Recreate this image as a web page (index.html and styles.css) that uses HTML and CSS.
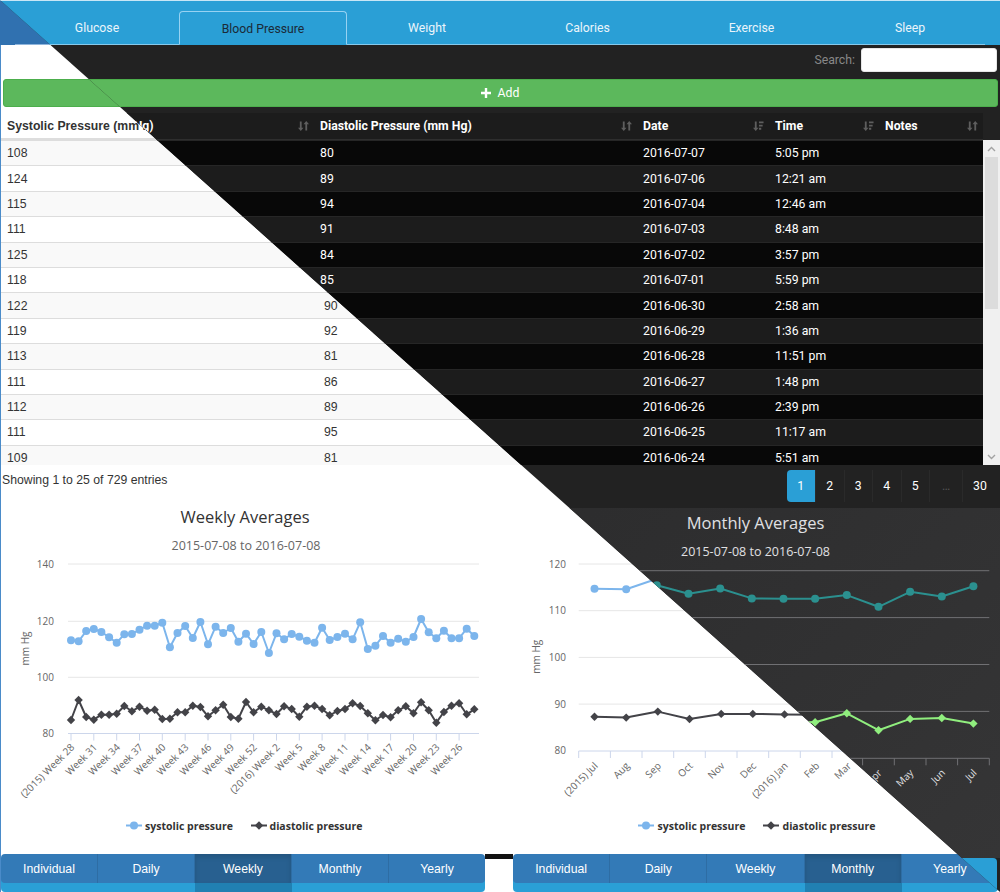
FILE: index.html
```html
<!DOCTYPE html>
<html>
<head>
<meta charset="utf-8">
<title>Blood Pressure</title>
<link rel="stylesheet" href="styles.css">
</head>
<body>
<div class="stage">

<!-- ================= LIGHT THEME ================= -->
<div class="theme light">
  <nav class="tabs">
    <ul class="tablist">
      <li class="tab">Glucose</li>
      <li class="tab active">Blood Pressure</li>
      <li class="tab">Weight</li>
      <li class="tab">Calories</li>
      <li class="tab">Exercise</li>
      <li class="tab">Sleep</li>
    </ul>
  </nav>
  <div class="main">
    <div class="toolbar"><span class="search-label">Search:</span><span class="search-input"></span></div>
    <div class="add-btn"><svg class="plus" width="10" height="10" viewBox="0 0 10 10"><path d="M3.8 0h2.4v3.8H10v2.4H6.2V10H3.8V6.2H0V3.8h3.8z"/></svg><span>Add</span></div>
    <div class="thead">
      <div class="th"><span>Systolic Pressure (mm Hg)</span><svg class="si" viewBox="0 0 12 12"><path d="M2 1h2v7h2l-3 3.5L0 8h2zM8 11h2V4h2L9 .5 6 4h2z"/></svg></div>
      <div class="th"><span>Diastolic Pressure (mm Hg)</span><svg class="si" viewBox="0 0 12 12"><path d="M2 1h2v7h2l-3 3.5L0 8h2zM8 11h2V4h2L9 .5 6 4h2z"/></svg></div>
      <div class="th"><span>Date</span><svg class="si" viewBox="0 0 12 12"><path d="M2 1h2v7h2l-3 3.5L0 8h2zM6.5 1h5v2h-5zM6.5 4.5h4v2h-4zM6.5 8h2.5v2h-2.5z"/></svg></div>
      <div class="th"><span>Time</span><svg class="si" viewBox="0 0 12 12"><path d="M2 1h2v7h2l-3 3.5L0 8h2zM6.5 1h5v2h-5zM6.5 4.5h4v2h-4zM6.5 8h2.5v2h-2.5z"/></svg></div>
      <div class="th"><span>Notes</span><svg class="si" viewBox="0 0 12 12"><path d="M2 1h2v7h2l-3 3.5L0 8h2zM8 11h2V4h2L9 .5 6 4h2z"/></svg></div>
    </div>
    <div class="tbody-wrap">
      <div class="rows">
        <div class="row"><span class="cell">108</span><span class="cell">80</span><span class="cell">2016-07-07</span><span class="cell">5:05 pm</span><span class="cell"></span></div>
        <div class="row"><span class="cell">124</span><span class="cell">89</span><span class="cell">2016-07-06</span><span class="cell">12:21 am</span><span class="cell"></span></div>
        <div class="row"><span class="cell">115</span><span class="cell">94</span><span class="cell">2016-07-04</span><span class="cell">12:46 am</span><span class="cell"></span></div>
        <div class="row"><span class="cell">111</span><span class="cell">91</span><span class="cell">2016-07-03</span><span class="cell">8:48 am</span><span class="cell"></span></div>
        <div class="row"><span class="cell">125</span><span class="cell">84</span><span class="cell">2016-07-02</span><span class="cell">3:57 pm</span><span class="cell"></span></div>
        <div class="row"><span class="cell">118</span><span class="cell">85</span><span class="cell">2016-07-01</span><span class="cell">5:59 pm</span><span class="cell"></span></div>
        <div class="row"><span class="cell">122</span><span class="cell">90</span><span class="cell">2016-06-30</span><span class="cell">2:58 am</span><span class="cell"></span></div>
        <div class="row"><span class="cell">119</span><span class="cell">92</span><span class="cell">2016-06-29</span><span class="cell">1:36 am</span><span class="cell"></span></div>
        <div class="row"><span class="cell">113</span><span class="cell">81</span><span class="cell">2016-06-28</span><span class="cell">11:51 pm</span><span class="cell"></span></div>
        <div class="row"><span class="cell">111</span><span class="cell">86</span><span class="cell">2016-06-27</span><span class="cell">1:48 pm</span><span class="cell"></span></div>
        <div class="row"><span class="cell">112</span><span class="cell">89</span><span class="cell">2016-06-26</span><span class="cell">2:39 pm</span><span class="cell"></span></div>
        <div class="row"><span class="cell">111</span><span class="cell">95</span><span class="cell">2016-06-25</span><span class="cell">11:17 am</span><span class="cell"></span></div>
        <div class="row"><span class="cell">109</span><span class="cell">81</span><span class="cell">2016-06-24</span><span class="cell">5:51 am</span><span class="cell"></span></div>
      </div>
      <div class="scrollbar"><div class="sb-arrow"><svg width="9" height="6" viewBox="0 0 9 6"><path d="M1 5l3.5-3.5L8 5" class="chev"/></svg></div><div class="sb-thumb"></div><div class="sb-track"></div><div class="sb-arrow"><svg width="9" height="6" viewBox="0 0 9 6"><path d="M1 1l3.5 3.5L8 1" class="chev"/></svg></div></div>
    </div>
    <div class="footer">
      <div class="info">Showing 1 to 25 of 729 entries</div>
      <ul class="pager">
        <li class="pg active">1</li><li class="pg">2</li><li class="pg">3</li><li class="pg">4</li><li class="pg">5</li><li class="pg ell">…</li><li class="pg last">30</li>
      </ul>
    </div>
    <div class="charts">
      <div class="chart">
        <svg class="csvg" width="500" height="346" viewBox="0 0 500 346">
          <defs>
            <marker id="lc" markerUnits="userSpaceOnUse" markerWidth="10" markerHeight="10" refX="5" refY="5"><circle cx="5" cy="5" r="4" class="f-blue"/></marker>
            <marker id="ld" markerUnits="userSpaceOnUse" markerWidth="10" markerHeight="10" refX="5" refY="5"><path d="M5 0.8L9.2 5 5 9.2 0.8 5z" class="f-black"/></marker>
          </defs>
          <text class="t-title" x="244" y="15" text-anchor="middle">Weekly Averages</text>
          <text class="t-sub" x="245" y="41.5" text-anchor="middle">2015-07-08 to 2016-07-08</text>
          <path class="grid-l" d="M67 56H478M67 113.3H478M67 169.3H478"/>
          <path class="axis-l" d="M67 225.5H478"/>
          <path class="axis-l" d="M70 225.5v7M92.8 225.5v7M115.7 225.5v7M138.5 225.5v7M161.3 225.5v7M184.2 225.5v7M207 225.5v7M229.8 225.5v7M252.6 225.5v7M275.5 225.5v7M298.3 225.5v7M321.1 225.5v7M344 225.5v7M366.8 225.5v7M389.6 225.5v7M412.5 225.5v7M435.3 225.5v7M458.1 225.5v7"/>
          <g class="t-axis" text-anchor="end">
            <text x="53" y="59.5">140</text><text x="53" y="116.8">120</text><text x="53" y="172.8">100</text><text x="53" y="228.8">80</text>
          </g>
          <text class="t-axis" text-anchor="middle" transform="translate(28 140.5) rotate(-90)">mm Hg</text>
          <g class="t-axis" text-anchor="end">
            <text transform="translate(74 240) rotate(-45)">(2015) Week 28</text>
            <text transform="translate(96.8 240) rotate(-45)">Week 31</text>
            <text transform="translate(119.7 240) rotate(-45)">Week 34</text>
            <text transform="translate(142.5 240) rotate(-45)">Week 37</text>
            <text transform="translate(165.3 240) rotate(-45)">Week 40</text>
            <text transform="translate(188.2 240) rotate(-45)">Week 43</text>
            <text transform="translate(211 240) rotate(-45)">Week 46</text>
            <text transform="translate(233.8 240) rotate(-45)">Week 49</text>
            <text transform="translate(256.6 240) rotate(-45)">Week 52</text>
            <text transform="translate(279.5 240) rotate(-45)">(2016) Week 2</text>
            <text transform="translate(302.3 240) rotate(-45)">Week 5</text>
            <text transform="translate(325.1 240) rotate(-45)">Week 8</text>
            <text transform="translate(348 240) rotate(-45)">Week 11</text>
            <text transform="translate(370.8 240) rotate(-45)">Week 14</text>
            <text transform="translate(393.6 240) rotate(-45)">Week 17</text>
            <text transform="translate(416.5 240) rotate(-45)">Week 20</text>
            <text transform="translate(439.3 240) rotate(-45)">Week 23</text>
            <text transform="translate(462.1 240) rotate(-45)">Week 26</text>
          </g>
          <polyline class="s-blue" points="70,132.3 77.6,133.3 85.2,123 92.8,121 100.4,124 108.1,129.3 115.7,134.7 123.3,126.3 130.9,126 138.5,121.7 146.1,117.7 153.7,117.7 161.3,114.7 168.9,139.3 176.5,125 184.2,118 191.8,130 199.4,114 207,136.3 214.6,118.7 222.2,125 229.8,120 237.4,133.7 245,125.7 252.6,136 260.3,124 267.9,145 275.5,125.3 283.1,131.3 290.7,126 298.3,128.7 305.9,132.7 313.5,134.7 321.1,119.7 328.7,132 336.4,129 344,125.7 351.6,131.3 359.2,114.3 366.8,141 374.4,137.7 382,128 389.6,134.7 397.2,130.7 404.8,133.7 412.5,129 420.1,111 427.7,124.3 435.3,130.3 442.9,122.7 450.5,130.3 458.1,130.3 465.7,120.7 473.3,128"/>
          <polyline class="s-black" points="70,212 77.6,192 85.2,209 92.8,211.7 100.4,206.7 108.1,206.7 115.7,205.7 123.3,198 130.9,203.3 138.5,198.7 146.1,202.7 153.7,201.7 161.3,211 168.9,210.7 176.5,204.3 184.2,204.3 191.8,197.7 199.4,199 207,208.3 214.6,202.3 222.2,196.7 229.8,209 237.4,210.7 245,194 252.6,204.3 260.3,198.7 267.9,202.3 275.5,206 283.1,198.3 290.7,201 298.3,208.7 305.9,198.7 313.5,197.7 321.1,201 328.7,207.3 336.4,203 344,201 351.6,195.3 359.2,198 366.8,205.3 374.4,212.3 382,207 389.6,209.3 397.2,202.3 404.8,198.3 412.5,205.3 420.1,194.3 427.7,202.3 435.3,214.7 442.9,204 450.5,197.7 458.1,195.3 465.7,206.3 473.3,201.3"/>
          <path class="ln-blue" d="M125 317.5H141"/><circle class="f-blue" cx="133" cy="317.5" r="4"/>
          <text class="t-legend" x="144" y="321.5">systolic pressure</text>
          <path class="ln-black" d="M250 317.5H266"/><path class="f-black" d="M258 313.3L262.2 317.5 258 321.7 253.8 317.5z"/>
          <text class="t-legend" x="268.5" y="321.5">diastolic pressure</text>
        </svg>
      </div>
      <div class="chart">
        <svg class="csvg" width="500" height="346" viewBox="0 0 500 346">
          <defs>
            <marker id="lc2" markerUnits="userSpaceOnUse" markerWidth="10" markerHeight="10" refX="5" refY="5"><circle cx="5" cy="5" r="4" class="f-blue"/></marker>
            <marker id="ld2" markerUnits="userSpaceOnUse" markerWidth="10" markerHeight="10" refX="5" refY="5"><path d="M5 0.8L9.2 5 5 9.2 0.8 5z" class="f-black"/></marker>
          </defs>
          <text class="t-title" x="255.5" y="14.7" text-anchor="middle">Monthly Averages</text>
          <text class="t-sub" x="255.5" y="41.5" text-anchor="middle">2015-07-08 to 2016-07-08</text>
          <path class="grid-l" d="M77.7 56H489.3M77.7 102.7H489.3M77.7 149.4H489.3M77.7 196.1H489.3"/>
          <path class="axis-l" d="M77.7 243H489.3"/>
          <path class="axis-l" d="M77.7 243v7M109.4 243v7M141 243v7M172.7 243v7M204.3 243v7M236 243v7M267.7 243v7M299.3 243v7M331 243v7M362.6 243v7M394.3 243v7M426 243v7M457.6 243v7M489.3 243v7"/>
          <g class="t-axis" text-anchor="end">
            <text x="65" y="59.5">120</text><text x="65" y="106.2">110</text><text x="65" y="152.9">100</text><text x="65" y="199.6">90</text><text x="65" y="246.3">80</text>
          </g>
          <text class="t-axis" text-anchor="middle" transform="translate(38.5 148.7) rotate(-90)">mm Hg</text>
          <g class="t-axis" text-anchor="end">
            <text transform="translate(97.5 258.5) rotate(-45)">(2015) Jul</text>
            <text transform="translate(129.2 258.5) rotate(-45)">Aug</text>
            <text transform="translate(160.8 258.5) rotate(-45)">Sep</text>
            <text transform="translate(192.5 258.5) rotate(-45)">Oct</text>
            <text transform="translate(224.2 258.5) rotate(-45)">Nov</text>
            <text transform="translate(255.8 258.5) rotate(-45)">Dec</text>
            <text transform="translate(287.5 258.5) rotate(-45)">(2016) Jan</text>
            <text transform="translate(319.1 258.5) rotate(-45)">Feb</text>
            <text transform="translate(350.8 258.5) rotate(-45)">Mar</text>
            <text transform="translate(382.5 258.5) rotate(-45)">Apr</text>
            <text transform="translate(414.1 258.5) rotate(-45)">May</text>
            <text transform="translate(445.8 258.5) rotate(-45)">Jun</text>
            <text transform="translate(477.4 258.5) rotate(-45)">Jul</text>
          </g>
          <polyline class="s-blue2" points="93.5,80.8 125.2,81.2 156.8,70.5 188.5,78.9 220.2,73.7 251.8,83.6 283.5,84 315.1,84 346.8,80.3 378.5,92 410.1,77 441.8,81.7 473.4,71.4"/>
          <polyline class="s-black2" points="93.5,208.7 125.2,209.6 156.8,203.6 188.5,211 220.2,205.9 251.8,205.9 283.5,206.4 315.1,206.8 346.8,198 378.5,214.8 410.1,203.6 441.8,202.6 473.4,208.3"/>
          <path class="ln-blue" d="M137 317.5H153"/><circle class="f-blue" cx="145" cy="317.5" r="4"/>
          <text class="t-legend" x="156.5" y="321.5">systolic pressure</text>
          <path class="ln-black" d="M262 317.5H278"/><path class="f-black" d="M270 313.3L274.2 317.5 270 321.7 265.8 317.5z"/>
          <text class="t-legend" x="281.5" y="321.5">diastolic pressure</text>
        </svg>
      </div>
    </div>
    <div class="btnbar">
      <div class="btngroup"><span class="btn">Individual</span><span class="btn">Daily</span><span class="btn active">Weekly</span><span class="btn">Monthly</span><span class="btn">Yearly</span></div>
      <div class="btngap"><span class="gapbar"></span></div>
      <div class="btngroup"><span class="btn">Individual</span><span class="btn">Daily</span><span class="btn">Weekly</span><span class="btn active">Monthly</span><span class="btn">Yearly</span></div>
    </div>
  </div>
</div>

<!-- ================= DARK THEME ================= -->
<div class="theme dark">
  <nav class="tabs">
    <ul class="tablist">
      <li class="tab">Glucose</li>
      <li class="tab active">Blood Pressure</li>
      <li class="tab">Weight</li>
      <li class="tab">Calories</li>
      <li class="tab">Exercise</li>
      <li class="tab">Sleep</li>
    </ul>
  </nav>
  <div class="main">
    <div class="toolbar"><span class="search-label">Search:</span><span class="search-input"></span></div>
    <div class="add-btn"><svg class="plus" width="10" height="10" viewBox="0 0 10 10"><path d="M3.8 0h2.4v3.8H10v2.4H6.2V10H3.8V6.2H0V3.8h3.8z"/></svg><span>Add</span></div>
    <div class="thead">
      <div class="th"><span>Systolic Pressure (mm Hg)</span><svg class="si" viewBox="0 0 12 12"><path d="M2 1h2v7h2l-3 3.5L0 8h2zM8 11h2V4h2L9 .5 6 4h2z"/></svg></div>
      <div class="th"><span>Diastolic Pressure (mm Hg)</span><svg class="si" viewBox="0 0 12 12"><path d="M2 1h2v7h2l-3 3.5L0 8h2zM8 11h2V4h2L9 .5 6 4h2z"/></svg></div>
      <div class="th"><span>Date</span><svg class="si" viewBox="0 0 12 12"><path d="M2 1h2v7h2l-3 3.5L0 8h2zM6.5 1h5v2h-5zM6.5 4.5h4v2h-4zM6.5 8h2.5v2h-2.5z"/></svg></div>
      <div class="th"><span>Time</span><svg class="si" viewBox="0 0 12 12"><path d="M2 1h2v7h2l-3 3.5L0 8h2zM6.5 1h5v2h-5zM6.5 4.5h4v2h-4zM6.5 8h2.5v2h-2.5z"/></svg></div>
      <div class="th"><span>Notes</span><svg class="si" viewBox="0 0 12 12"><path d="M2 1h2v7h2l-3 3.5L0 8h2zM8 11h2V4h2L9 .5 6 4h2z"/></svg></div>
    </div>
    <div class="tbody-wrap">
      <div class="rows">
        <div class="row"><span class="cell">108</span><span class="cell">80</span><span class="cell">2016-07-07</span><span class="cell">5:05 pm</span><span class="cell"></span></div>
        <div class="row"><span class="cell">124</span><span class="cell">89</span><span class="cell">2016-07-06</span><span class="cell">12:21 am</span><span class="cell"></span></div>
        <div class="row"><span class="cell">115</span><span class="cell">94</span><span class="cell">2016-07-04</span><span class="cell">12:46 am</span><span class="cell"></span></div>
        <div class="row"><span class="cell">111</span><span class="cell">91</span><span class="cell">2016-07-03</span><span class="cell">8:48 am</span><span class="cell"></span></div>
        <div class="row"><span class="cell">125</span><span class="cell">84</span><span class="cell">2016-07-02</span><span class="cell">3:57 pm</span><span class="cell"></span></div>
        <div class="row"><span class="cell">118</span><span class="cell">85</span><span class="cell">2016-07-01</span><span class="cell">5:59 pm</span><span class="cell"></span></div>
        <div class="row"><span class="cell">122</span><span class="cell">90</span><span class="cell">2016-06-30</span><span class="cell">2:58 am</span><span class="cell"></span></div>
        <div class="row"><span class="cell">119</span><span class="cell">92</span><span class="cell">2016-06-29</span><span class="cell">1:36 am</span><span class="cell"></span></div>
        <div class="row"><span class="cell">113</span><span class="cell">81</span><span class="cell">2016-06-28</span><span class="cell">11:51 pm</span><span class="cell"></span></div>
        <div class="row"><span class="cell">111</span><span class="cell">86</span><span class="cell">2016-06-27</span><span class="cell">1:48 pm</span><span class="cell"></span></div>
        <div class="row"><span class="cell">112</span><span class="cell">89</span><span class="cell">2016-06-26</span><span class="cell">2:39 pm</span><span class="cell"></span></div>
        <div class="row"><span class="cell">111</span><span class="cell">95</span><span class="cell">2016-06-25</span><span class="cell">11:17 am</span><span class="cell"></span></div>
        <div class="row"><span class="cell">109</span><span class="cell">81</span><span class="cell">2016-06-24</span><span class="cell">5:51 am</span><span class="cell"></span></div>
      </div>
      <div class="scrollbar"><div class="sb-arrow"><svg width="9" height="6" viewBox="0 0 9 6"><path d="M1 5l3.5-3.5L8 5" class="chev"/></svg></div><div class="sb-thumb"></div><div class="sb-track"></div><div class="sb-arrow"><svg width="9" height="6" viewBox="0 0 9 6"><path d="M1 1l3.5 3.5L8 1" class="chev"/></svg></div></div>
    </div>
    <div class="footer">
      <div class="info">Showing 1 to 25 of 729 entries</div>
      <ul class="pager">
        <li class="pg active">1</li><li class="pg">2</li><li class="pg">3</li><li class="pg">4</li><li class="pg">5</li><li class="pg ell">…</li><li class="pg last">30</li>
      </ul>
    </div>
    <div class="charts">
      <div class="chart">
        <svg class="csvg" width="500" height="350" viewBox="0 0 500 350">
          <text class="t-title" x="244" y="20.7" text-anchor="middle">Weekly Averages</text>
          <text class="t-sub" x="245" y="47.5" text-anchor="middle">2015-07-08 to 2016-07-08</text>
        </svg>
      </div>
      <div class="chart">
        <svg class="csvg" width="500" height="350" viewBox="0 0 500 350">
          <defs>
            <marker id="dc" markerUnits="userSpaceOnUse" markerWidth="10" markerHeight="10" refX="5" refY="5"><circle cx="5" cy="5" r="4" class="f-teal"/></marker>
            <marker id="dd" markerUnits="userSpaceOnUse" markerWidth="10" markerHeight="10" refX="5" refY="5"><path d="M5 0.8L9.2 5 5 9.2 0.8 5z" class="f-green"/></marker>
          </defs>
          <text class="t-title" x="255.5" y="20.7" text-anchor="middle">Monthly Averages</text>
          <text class="t-sub" x="255.5" y="47.5" text-anchor="middle">2015-07-08 to 2016-07-08</text>
          <path class="grid-d" d="M77.7 62.7H489.3M77.7 109.6H489.3M77.7 156.5H489.3M77.7 203.4H489.3"/>
          <path class="axis-d" d="M77.7 250.3H489.3"/>
          <path class="axis-d" d="M77.7 250.3v7M109.4 250.3v7M141 250.3v7M172.7 250.3v7M204.3 250.3v7M236 250.3v7M267.7 250.3v7M299.3 250.3v7M331 250.3v7M362.6 250.3v7M394.3 250.3v7M426 250.3v7M457.6 250.3v7M489.3 250.3v7"/>
          <g class="t-axis" text-anchor="end">
            <text x="65" y="66.2">120</text><text x="65" y="113.1">110</text><text x="65" y="160">100</text><text x="65" y="206.9">90</text><text x="65" y="253.8">80</text>
          </g>
          <text class="t-axis" text-anchor="middle" transform="translate(38.5 156) rotate(-90)">mm Hg</text>
          <g class="t-axis" text-anchor="end">
            <text transform="translate(97.5 265.5) rotate(-45)">(2015) Jul</text>
            <text transform="translate(129.2 265.5) rotate(-45)">Aug</text>
            <text transform="translate(160.8 265.5) rotate(-45)">Sep</text>
            <text transform="translate(192.5 265.5) rotate(-45)">Oct</text>
            <text transform="translate(224.2 265.5) rotate(-45)">Nov</text>
            <text transform="translate(255.8 265.5) rotate(-45)">Dec</text>
            <text transform="translate(287.5 265.5) rotate(-45)">(2016) Jan</text>
            <text transform="translate(319.1 265.5) rotate(-45)">Feb</text>
            <text transform="translate(350.8 265.5) rotate(-45)">Mar</text>
            <text transform="translate(382.5 265.5) rotate(-45)">Apr</text>
            <text transform="translate(414.1 265.5) rotate(-45)">May</text>
            <text transform="translate(445.8 265.5) rotate(-45)">Jun</text>
            <text transform="translate(477.4 265.5) rotate(-45)">Jul</text>
          </g>
          <polyline class="s-teal" points="93.5,87.6 125.2,88 156.8,77.2 188.5,85.7 220.2,80.5 251.8,90.4 283.5,90.8 315.1,90.8 346.8,87.1 378.5,98.8 410.1,83.8 441.8,88.5 473.4,78.2"/>
          <polyline class="s-green" points="93.5,216.1 125.2,217 156.8,210.9 188.5,218.4 220.2,213.2 251.8,213.2 283.5,213.7 315.1,214.2 346.8,205.3 378.5,222.2 410.1,210.9 441.8,210 473.4,215.6"/>
        </svg>
      </div>
    </div>
    <div class="btnbar">
      <div class="btngroup"><span class="btn">Individual</span><span class="btn">Daily</span><span class="btn active">Weekly</span><span class="btn">Monthly</span><span class="btn">Yearly</span></div>
      <div class="btngap"></div>
      <div class="btngroup"><span class="btn">Individual</span><span class="btn">Daily</span><span class="btn">Weekly</span><span class="btn active">Monthly</span><span class="btn">Yearly</span></div>
    </div>
  </div>
</div>

</div>
</body>
</html>
```

FILE: styles.css
```css
* { box-sizing: border-box; margin: 0; padding: 0; }
html, body { width: 1000px; height: 892px; overflow: hidden; }
body { margin: 0; background: #fff; }

.stage { position: relative; width: 1000px; height: 892px; overflow: hidden; }

.theme {
  width: 1000px;
  height: 892px;
  display: flex;
  flex-direction: column;
  overflow: hidden;
  font-size: 12.25px;
}
.light { font-family: "Liberation Sans", Arial, sans-serif; color: #333; background: #fff; }
.dark {
  position: absolute;
  left: 0;
  top: 0;
  font-family: Roboto, "Liberation Sans", sans-serif;
  color: #fff;
  background: #222;
  clip-path: polygon(0 0, 100% 0, 100% 100%);
}

/* ---------- tabs ---------- */
.tabs { height: 45px; flex: none; padding: 10px 15px 0; border-top: 1px solid #c8e6f6; }
.light .tabs { background: #3071b0; border-top-color: #a9c6e4; }
.dark .tabs { background: #2a9fd6; }
.tablist {
  display: grid;
  grid-template-columns: 164px 168px 160px 161px 167px 150px;
  height: 34px;
  list-style: none;
}
.tab {
  display: flex;
  align-items: center;
  justify-content: center;
  border-bottom: 1px solid #86c9ec;
  color: #eaf5fb;
  padding-top: 1px;
}
.light .tab { border-bottom-color: #8fb5dc; color: #fff; }
.tab.active {
  border: 1px solid #97d2f2;
  border-bottom-color: transparent;
  border-radius: 4px 4px 0 0;
  color: #1b2a37;
}
.light .tab.active { border-color: #a9c6e4; border-bottom-color: transparent; background: #fff; color: #555; }

/* ---------- main ---------- */
.main { flex: 1; display: flex; flex-direction: column; min-height: 0; }
.light .main { border-left: 1px solid #4a8bc9; }

.toolbar {
  height: 33px;
  flex: none;
  display: flex;
  align-items: flex-start;
  justify-content: flex-end;
  gap: 6px;
  padding: 3px 3px 0 0;
}
.search-label { line-height: 24px; color: #888; }
.light .search-label { color: #333; }
.search-input { width: 136px; height: 24px; background: #fff; border-radius: 3px; border: 1px solid #e6e6e6; }
.light .search-input { border-color: #aaa; }

.add-btn {
  height: 28px;
  flex: none;
  margin: 1px 2px 6px;
  background: #5cb85c;
  border: 1px solid #4cae4c;
  border-radius: 3px;
  color: #fff;
  display: flex;
  align-items: center;
  justify-content: center;
  gap: 7px;
}
.plus { fill: #fff; }

/* ---------- table ---------- */
.thead, .row {
  display: grid;
  grid-template-columns: 314px 323px 132px 110px 104px;
  width: 983px;
}
.light .thead, .light .row { grid-template-columns: 317px 323px 132px 110px 1fr; width: 982px; }
.thead { height: 27px; flex: none; font-weight: bold; }
.dark .thead { background: #1c1c1c; border-bottom: 1px solid #2e2e2e; }
.light .thead { background: #fff; border-bottom: 2px solid #ddd; }
.th { display: flex; align-items: center; justify-content: space-between; padding: 0 5px 0 6px; }
.si { width: 11px; height: 12px; fill: #5e5e5e; }
.light .si { fill: #c4c4c4; }

.tbody-wrap { height: 325px; flex: none; display: flex; overflow: hidden; }
.rows { width: 983px; }
.light .rows { width: 982px; }
.row { height: 25.4px; align-items: center; }
.cell { padding-left: 6px; white-space: nowrap; }
.dark .row { border-top: 1px solid #262626; }
.dark .row:nth-child(odd) { background: #080808; }
.dark .row:nth-child(even) { background: #1c1c1c; }
.light .row { border-top: 1px solid #ddd; }
.light .row:nth-child(odd) { background: #f9f9f9; }
.light .row:nth-child(even) { background: #fff; }

.scrollbar { width: 17px; flex: none; display: flex; flex-direction: column; background: #f0f0f0; }
.sb-arrow { height: 17px; display: flex; align-items: center; justify-content: center; background: #f0f0f0; }
.chev { fill: none; stroke: #a3a3a3; stroke-width: 1.4; }
.sb-thumb { height: 152px; margin: 0 2px; background: #dcdcdc; }
.sb-track { flex: 1; }

/* ---------- footer ---------- */
.footer { height: 43px; flex: none; display: flex; justify-content: space-between; align-items: flex-start; }
.info { padding: 8px 0 0 1px; line-height: 14px; }
.dark .info { color: #888; }
.pager { display: flex; list-style: none; margin: 5px 3px 0 0; height: 32px; }
.pg {
  width: 28.5px;
  display: flex;
  align-items: center;
  justify-content: center;
  border-left: 1px solid #2a2a2a;
  color: #fff;
}
.pg.ell { width: 33px; color: #555; }
.pg.last { width: 35px; border-radius: 0 4px 4px 0; }
.pg.active { background: #2a9fd6; border-left: none; border-radius: 4px 0 0 4px; }
.light .pg { border: 1px solid #ddd; border-left: none; color: #337ab7; }
.light .pg.active { background: #337ab7; color: #fff; border-left: 1px solid #337ab7; }

/* ---------- charts ---------- */
.charts { height: 346px; flex: none; display: flex; }
.dark .charts { height: 350px; }
.chart { width: 500px; height: 100%; }
.dark .chart { background: linear-gradient(135deg, #2c2c2d 0%, #353536 100%); }
.csvg { display: block; font-family: "Open Sans", "DejaVu Sans", sans-serif; }

.t-title { font-size: 16.5px; fill: #333; }
.t-sub { font-size: 12.5px; fill: #666; }
.t-axis { font-size: 10px; fill: #666; }
.t-legend { font-size: 10.5px; font-weight: bold; fill: #333; }
.dark .t-title, .dark .t-sub, .dark .t-axis { fill: #e0e0e3; }

.grid-l { stroke: #e6e6e6; stroke-width: 1; fill: none; }
.axis-l { stroke: #ccd6eb; stroke-width: 1; fill: none; }
.grid-d { stroke: #707073; stroke-width: 1; fill: none; }
.axis-d { stroke: #707073; stroke-width: 1; fill: none; }

.f-blue { fill: #7cb5ec; }
.f-black { fill: #434348; }
.f-teal { fill: #2b908f; }
.f-green { fill: #90ee7e; }
.ln-blue { stroke: #7cb5ec; stroke-width: 2; }
.ln-black { stroke: #434348; stroke-width: 2; }

.s-blue, .s-black, .s-blue2, .s-black2, .s-teal, .s-green { fill: none; stroke-width: 2; stroke-linejoin: round; }
.s-blue { stroke: #7cb5ec; marker: url(#lc); }
.s-black { stroke: #434348; marker: url(#ld); }
.s-blue2 { stroke: #7cb5ec; marker: url(#lc2); }
.s-black2 { stroke: #434348; marker: url(#ld2); }
.s-teal { stroke: #2b908f; marker: url(#dc); }
.s-green { stroke: #90ee7e; marker: url(#dd); }

/* ---------- bottom buttons ---------- */
.btnbar {
  flex: none;
  display: grid;
  grid-template-columns: 484px 28px 485px;
  height: 38px;
}
.dark .btnbar { height: 34px; }
.btngroup { display: flex; height: 29px; }
.dark .btngroup { height: 34px; }
.btn {
  flex: 1;
  display: flex;
  align-items: center;
  justify-content: center;
  color: #fff;
  background: #337ab7;
  border-right: 1px solid #2e6da4;
  box-shadow: 0 9px 0 0 #2a9fd6;
}
.btn:first-child { border-radius: 4px 0 0 4px; }
.btn:last-child { border-radius: 0 4px 4px 0; border-right: none; }
.btn.active { background: #286090; box-shadow: inset 0 3px 5px rgba(0,0,0,.125), 0 9px 0 0 #2180b2; }
.dark .btn { background: #2a9fd6; border-right-color: #2590c4; box-shadow: none; }
.dark .btn.active { background: #2080b5; }
.btngap { display: flex; flex-direction: column; }
.gapbar { height: 5px; background: #121212; }
```
